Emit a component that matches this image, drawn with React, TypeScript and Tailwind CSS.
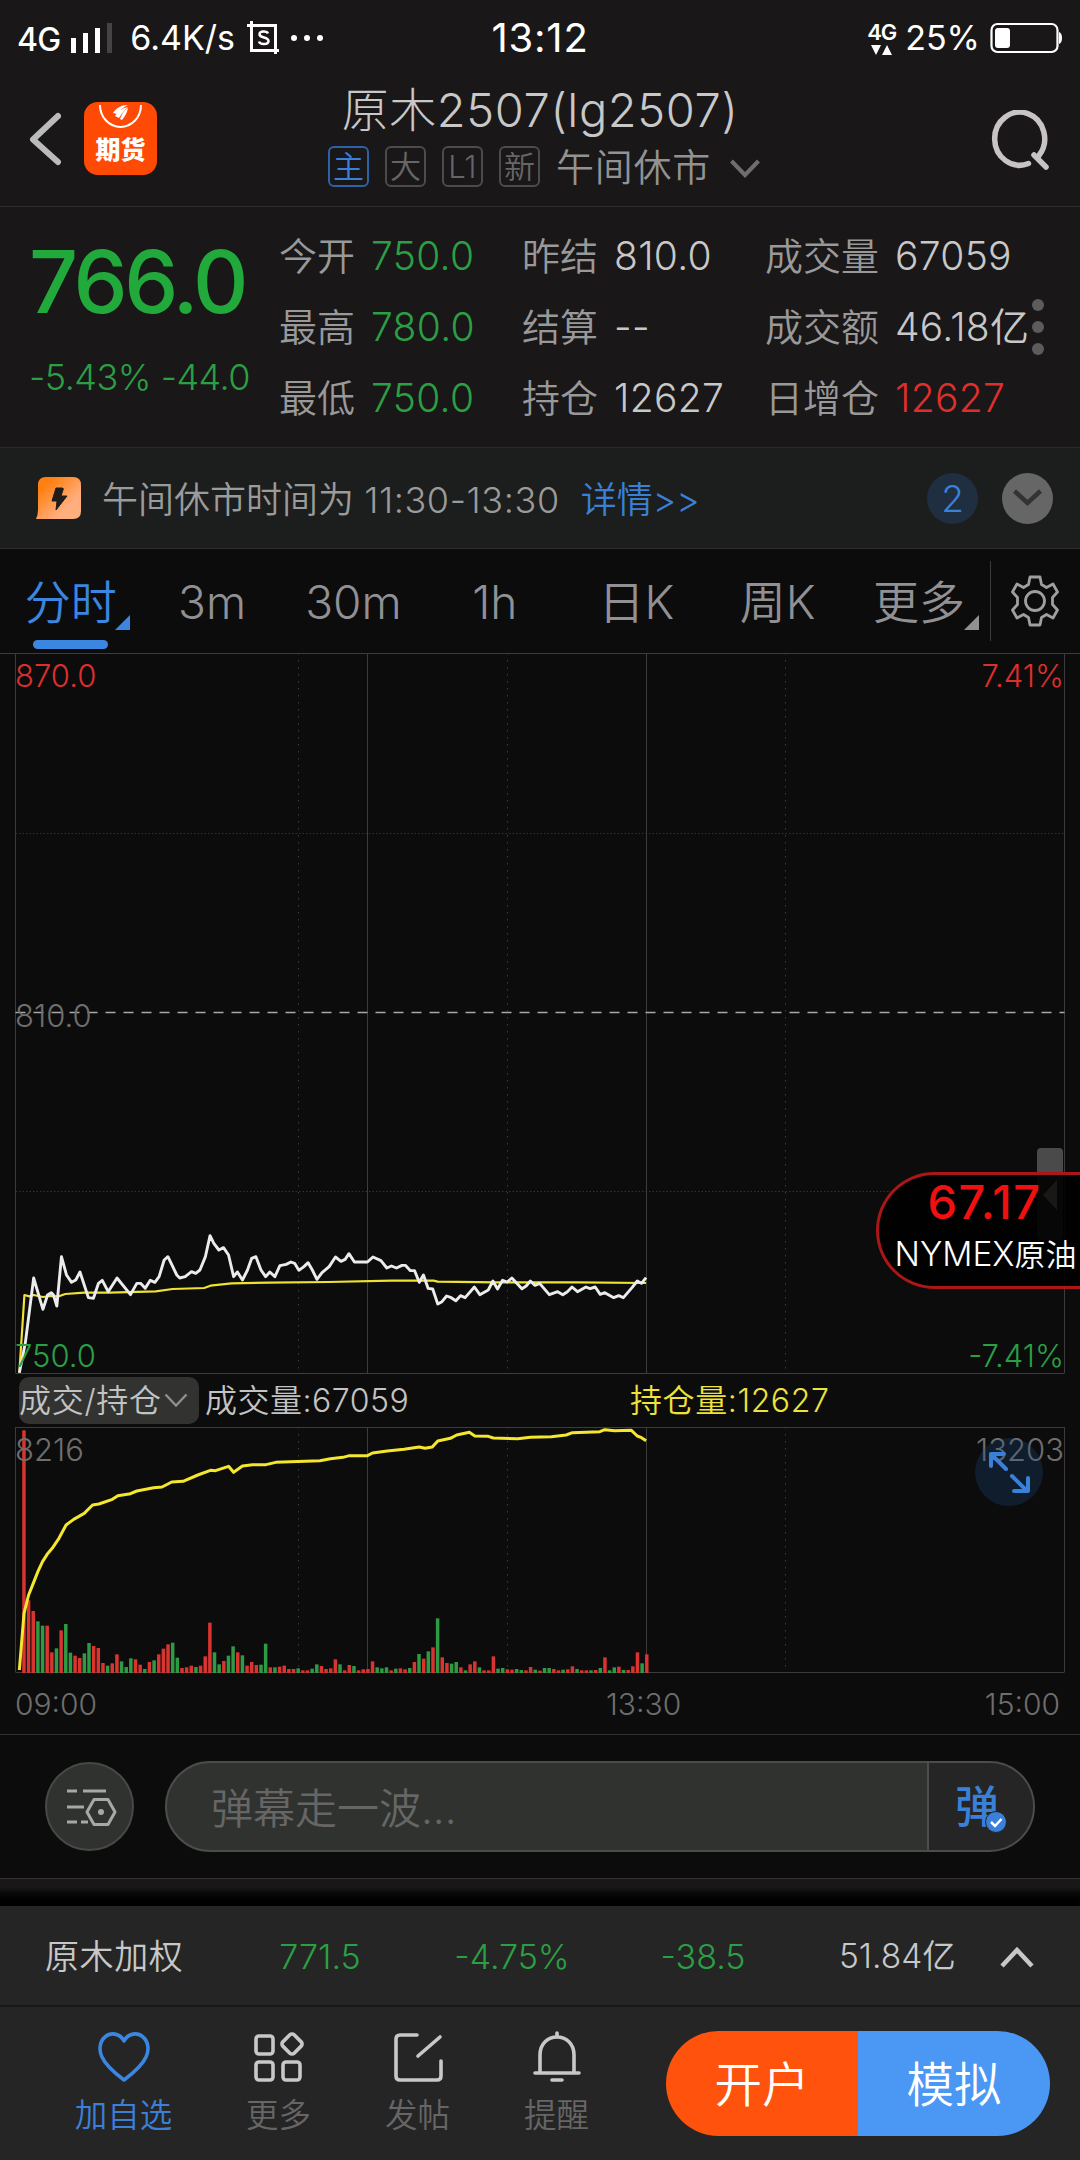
import type { ReactNode } from "react";

const UP = "#df2f2c";
const DOWN = "#2b9f44";

// One bar per minute: direction + height
const VOLUME =
  "r728 r218 r186 g155 g142 r142 r62 g74 r128 g147 g61 r52 r45 g59 g90 r81 r75 r30 g22 r29 r56 g35 g18 g44 r41 r25 g12 r33 g38 r56 r73 r86 g91 g46 r15 r17 r22 g18 r22 r50 r151 g62 g26 r36 g52 g80 r62 g53 r22 r33 r24 g25 g88 r17 g17 r19 r22 r12 r12 g14 r8 r8 g13 g26 r21 r12 r14 r41 g26 r8 r24 g21 r8 r11 r12 r35 g17 g14 g17 r8 g13 r14 r11 g15 r33 g57 r43 g65 r77 g164 r47 r30 g28 g33 r17 g8 r26 r35 g17 r8 r8 r50 g13 g15 r11 r10 g12 g9 r8 r18 g10 r7 g15 g15 r12 r8 g10 r11 r20 g12 r8 r8 g8 r9 g15 r47 g8 g17 r19 g9 r9 r20 r62 g29 r56"
    .split(" ")
    .map((s) => ({ up: s[0] === "r", h: Number(s.slice(1)) / 3 }));

const PRICE_LINE =
  "46,518 60,430 80,234 102,328 113,285 122,278 127,285 135,318 146,170 158,225 170,247 180,240 190,216 210,293 222,295 234,250 243,241 257,275 278,234 310,284 325,250 334,250 345,265 357,241 368,247 378,230 390,180 399,170 420,225 427,234 440,230 455,215 465,220 475,210 488,170 499,107 508,130 520,150 531,143 543,165 555,230 564,216 576,240 588,210 598,175 608,170 620,210 631,230 641,216 653,230 665,197 680,193 691,186 700,190 710,211 722,200 732,188 742,210 753,238 765,218 782,200 797,171 810,184 820,178 829,161 842,186 873,186 886,171 905,182 919,204 930,198 942,204 955,196 963,196 975,212 985,212 996,247 1006,225 1017,265 1028,267 1040,312 1050,305 1061,288 1072,293 1083,302 1094,287 1105,293 1127,261 1140,284 1160,270 1171,243 1182,267 1194,241 1205,246 1216,234 1240,266 1250,258 1260,243 1271,256 1282,250 1305,284 1325,275 1337,284 1348,275 1359,261 1372,275 1392,261 1402,266 1414,261 1426,283 1437,278 1458,293 1470,287 1481,293 1502,262 1514,243 1524,250 1535,233";
const AVG_LINE =
  "46,518 58,285 70,289 80,285 102,291 120,288 140,289 155,282 200,278 260,278 370,274 410,267 485,264 500,257 550,250 640,248 780,246 930,242 1030,242 1040,245 1180,247 1370,247 1535,249";
const OI_LINE =
  "46,780 57,610 68,555 79,520 90,485 101,455 112,433 124,415 140,385 157,345 175,328 200,310 220,285 235,282 267,268 280,257 310,251 325,243 365,233 385,231 408,216 435,214 470,195 500,181 512,182 543,169 555,187 576,168 600,164 632,164 655,157 760,152 785,146 815,142 830,137 873,137 885,129 920,123 960,118 996,111 1010,115 1027,111 1040,93 1070,85 1085,75 1115,67 1128,78 1160,79 1172,84 1230,86 1260,82 1310,80 1345,75 1360,68 1425,65 1437,59 1460,62 1500,61 1514,78 1524,83 1535,92";

const TABS = ["分时", "3m", "30m", "1h", "日K", "周K", "更多"];

const QUOTES = [
  [
    { label: "今开", value: "750.0", color: "text-[#2b9f44]" },
    { label: "最高", value: "780.0", color: "text-[#2b9f44]" },
    { label: "最低", value: "750.0", color: "text-[#2b9f44]" },
  ],
  [
    { label: "昨结", value: "810.0", color: "text-[#c8c8c8]" },
    { label: "结算", value: "--", color: "text-[#c8c8c8]" },
    { label: "持仓", value: "12627", color: "text-[#c8c8c8]" },
  ],
  [
    { label: "成交量", value: "67059", color: "text-[#c8c8c8]" },
    { label: "成交额", value: "46.18亿", color: "text-[#c8c8c8]" },
    { label: "日增仓", value: "12627", color: "text-[#df2f2c]" },
  ],
];

function StatusBar() {
  return (
    <div className="flex h-[76px] items-center pl-[17px] pr-[17px] text-white">
      <div className="flex flex-1 items-center">
        <span className="mt-1 text-[32px] font-medium leading-none tracking-tight">4G</span>
        <svg className="ml-[11px]" width="43" height="32" viewBox="0 0 43 32" fill="#fff">
          <rect x="0" y="16" width="5" height="15" />
          <rect x="12" y="11" width="5" height="20" />
          <rect x="24" y="6" width="5" height="25" />
          <rect x="36" y="1" width="5" height="30" fill="#444" />
        </svg>
        <span className="ml-4 text-[34px] leading-none">6.4K/s</span>
        <svg className="ml-3" width="33" height="34" viewBox="0 0 33 34" fill="none" stroke="#fff" strokeWidth="3">
          <path d="M0 4.5H28.500V33M4.500 0V29.500H32" />
          <path d="M21 12.500C20 10 12 9.500 12.500 13.500C13 17.500 21.500 15.500 21.500 20C21.500 24 13 24 12 20.500" strokeWidth="2.500" />
        </svg>
        <svg className="ml-[10px]" width="34" height="8" viewBox="0 0 34 8" fill="#fff">
          <circle cx="4" cy="4" r="3" />
          <circle cx="17" cy="4" r="3" />
          <circle cx="30" cy="4" r="3" />
        </svg>
      </div>
      <span className="text-[40px] leading-none tracking-[0.8px]">13:12</span>
      <div className="flex flex-1 items-center justify-end">
        <div className="mr-[9px] flex flex-col items-center">
          <span className="text-[22px] font-semibold leading-[20px] tracking-tighter">4G</span>
          <svg className="mt-[3px]" width="22" height="10" viewBox="0 0 22 10" fill="#fff">
            <path d="M0 0H10L5 10ZM11 10H21L16 0Z" />
          </svg>
        </div>
        <span className="text-[34px] leading-none">25%</span>
        <svg className="ml-[10px]" width="73" height="32" viewBox="0 0 73 32">
          <rect x="1.500" y="2" width="66" height="28" rx="6" fill="none" stroke="#fff" strokeWidth="2.200" />
          <rect x="5" y="6" width="15" height="20" rx="3" fill="#fff" />
          <path d="M69 10Q72 11 72 16Q72 21 69 22Z" fill="#fff" />
        </svg>
      </div>
    </div>
  );
}

function Tag({ children, active }: { children: ReactNode; active?: boolean }) {
  return (
    <span
      className={`flex h-[41px] w-[41px] items-center justify-center rounded-md border-2 text-[31px] font-[350] leading-none ${
        active ? "border-[#2c62a8] text-[#3a80d8]" : "border-[#4c4c4c] text-[#666]"
      }`}
    >
      {children}
    </span>
  );
}

function Header() {
  return (
    <div className="flex h-[131px] items-start border-b border-[#2c2c2c]">
      <div className="flex w-[328px] items-center pl-[29px] pt-[26px]">
        <svg width="32" height="56" viewBox="0 0 32 56" fill="none" stroke="#bbb" strokeWidth="6" strokeLinecap="round" strokeLinejoin="round">
          <path d="M29 5L4 28.500L29 51" />
        </svg>
        <div className="relative ml-[23px] flex h-[73px] w-[73px] items-end justify-center overflow-hidden rounded-[14px] bg-[#ff4a05] pb-[12px]">
          <svg className="absolute left-0 top-0" width="73" height="30" viewBox="0 0 73 30">
            <path d="M16 0A20.500 22 0 0 0 57 0" transform="translate(0 3)" fill="none" stroke="#fff" strokeWidth="2" />
            <path d="M29 11C32 6 37 3 44 3C38 6 35 9 33 12ZM31 14C35 8 39 6 44 5C40 9 37 12 35 16ZM36 17C38 11 41 8 44 6C43 11 41 14 38 18Z" fill="#fff" />
          </svg>
          <span className="text-[25px] font-black leading-none text-white">期货</span>
        </div>
      </div>
      <div className="flex w-[424px] flex-col items-center pt-[6px]">
        <h1 className="whitespace-nowrap text-[47px] font-light leading-[56px] tracking-[0.6px] text-[#c8c8c8]">原木2507(lg2507)</h1>
        <div className="mt-[8px] flex items-center gap-4 pl-[8px]">
          <Tag active>主</Tag>
          <Tag>大</Tag>
          <Tag>L1</Tag>
          <Tag>新</Tag>
          <span className="whitespace-nowrap text-[38px] font-[350] leading-[38px] tracking-[0.8px] text-[#929292]">午间休市</span>
          <svg className="ml-[3px] mt-1" width="30" height="20" viewBox="0 0 30 20" fill="none" stroke="#6e6e6e" strokeWidth="4">
            <path d="M1.500 2L15 16L28.500 2" />
          </svg>
        </div>
      </div>
      <div className="flex flex-1 justify-end pr-[30px] pt-[34px]">
        <svg width="60" height="62" viewBox="0 0 60 62" fill="none" stroke="#c8c4c6" strokeWidth="5.500" strokeLinecap="round">
          <path d="M38.500 53.500A25 26.500 0 1 1 49 45.500" />
          <path d="M44 45L56 57" />
        </svg>
      </div>
    </div>
  );
}

function QuotePanel() {
  return (
    <div className="relative flex h-[241px] border-b border-[#2a2a2a] pt-[14px]">
      <div className="flex w-[279px] flex-col pl-[29px] pt-[11px]">
        <span className="text-[86px] font-medium leading-[100px] tracking-[-3.3px] text-[#22a93c]">766.0</span>
        <span className="mt-[25px] whitespace-nowrap text-[36px] font-light leading-[40px] tracking-[-0.5px] text-[#2b9f44]">-5.43% -44.0</span>
      </div>
      {QUOTES.map((col, i) => (
        <div key={i} className={i === 2 ? "flex flex-col" : "flex w-[243px] flex-col"}>
          {col.map((q) => (
            <div key={q.label} className="flex h-[71px] items-center whitespace-nowrap text-[38px]">
              <span className="font-[350] text-[#999]">{q.label}</span>
              <span className={`ml-4 text-[39px] font-[350] tracking-[0.3px] ${q.color}`}>{q.value}</span>
            </div>
          ))}
        </div>
      ))}
      <div className="absolute right-[36px] top-[92px] flex flex-col gap-[10px]">
        <i className="h-3 w-3 rounded-full bg-[#5c5c5c]" />
        <i className="h-3 w-3 rounded-full bg-[#5c5c5c]" />
        <i className="h-3 w-3 rounded-full bg-[#5c5c5c]" />
      </div>
    </div>
  );
}

function Notice() {
  return (
    <div className="flex h-[101px] items-center border-b border-[#2b2d2c] bg-[#1c1e1d] pl-9 pr-[27px]">
      <svg width="46" height="43" viewBox="0 0 46 43">
        <defs>
          <linearGradient id="notice" x1="0" y1="0" x2="1" y2="1">
            <stop offset="0.200" stopColor="#ff7f11" />
            <stop offset="0.700" stopColor="#ffae7d" />
          </linearGradient>
        </defs>
        <path d="M2 8Q2 0 10 0H37Q45 0 45 8V34Q45 42 37 42H0Q2 38 2 33Z" fill="url(#notice)" />
        <path d="M20 11H26Q28 11 27 13L25 19H31L20 33L21 24H16Z" fill="#201c1a" stroke="#201c1a" strokeLinejoin="round" />
      </svg>
      <span className="ml-[20px] mt-1 whitespace-nowrap text-[36px] font-[350] text-[#9b9b9b]">
        午间休市时间为 <span className="tracking-[0.6px]">11:30-13:30</span>
      </span>
      <span className="ml-[21px] mt-1 whitespace-nowrap text-[36px] font-[350] text-[#3a80d8]">详情&gt;&gt;</span>
      <span className="ml-auto flex h-[51px] w-[51px] items-center justify-center rounded-full bg-[#202e42] text-[37px] font-[350] leading-none text-[#3a80d8]">
        2
      </span>
      <span className="ml-6 flex h-[51px] w-[51px] items-center justify-center rounded-full bg-[#666]">
        <svg width="29" height="18" viewBox="0 0 29 18" fill="none" stroke="#333" strokeWidth="4.500">
          <path d="M1.500 2L14.500 14L27.500 2" />
        </svg>
      </span>
    </div>
  );
}

function Tabs() {
  return (
    <div className="flex h-[104px] items-center">
      {TABS.map((tab, i) => (
        <div
          key={tab}
          className={`relative flex h-full w-[141.4px] items-center justify-center pt-[2px] text-[46px] font-[350] ${
            i === 0 ? "text-[#3a86e0]" : "text-[#919094]"
          }`}
        >
          <span className="whitespace-nowrap">{tab}</span>
          {(i === 0 || i === 6) && (
            <svg className="absolute right-[11px] top-[66px]" width="15" height="15" viewBox="0 0 15 15" fill="currentColor">
              <path d="M15 0V15H0Z" />
            </svg>
          )}
          {i === 0 && <span className="absolute bottom-[4px] left-[33px] h-[9px] w-[75px] rounded-full bg-[#3a86e0]" />}
        </div>
      ))}
      <div className="flex h-20 flex-1 items-center justify-center border-l border-[#3c3c3c]">
        <svg width="48" height="52" viewBox="0 0 48 52" fill="none" stroke="#a09fa0" strokeWidth="2.800" strokeLinejoin="round">
          <path d="M19 2H29L30.500 9.500L35.500 12.500L42 9L46.500 17L41.500 22.500V29.500L46.500 35L42 43L35.500 39.500L30.500 42.500L29 50H19L17.500 42.500L12.500 39.500L6 43L1.500 35L6.500 29.500V22.500L1.500 17L6 9L12.500 12.500L17.500 9.500Z" />
          <circle cx="24" cy="26" r="9.500" />
        </svg>
      </div>
    </div>
  );
}

type AxisTextProps = { x: number; y: number; fill: string; end?: boolean; size?: number; children: string };

function AxisText({ x, y, fill, end, size = 31, children }: AxisTextProps) {
  return (
    <text x={x} y={y} fill={fill} fontSize={size} fontWeight="350" textAnchor={end ? "end" : "start"}>
      {children}
    </text>
  );
}

function Grid({ height }: { height: number }) {
  return (
    <g stroke="#3c3c3c" strokeWidth="1">
      <path d={`M15.500 0V${height}M367.500 0V${height}M646.500 0V${height}M1064.500 0V${height}`} />
      <path d={`M298.500 0V${height}M507.500 0V${height}M785.500 0V${height}`} strokeDasharray="1.500 5.500" />
    </g>
  );
}

function PriceChart() {
  return (
    <div className="relative h-[721px]">
      <svg className="block" width="1080" height="721" viewBox="0 0 1080 721">
        <Grid height={720} />
        <g stroke="#3c3c3c">
          <path d="M0 .5H1080M15.500 720.500H1064.500" />
          <path d="M15.500 180.500H1064.500M15.500 538.500H1064.500" strokeDasharray="1.500 2" strokeOpacity=".8" />
        </g>
        <path d="M15.500 359.500H1064.500" stroke="#a8a8a8" strokeWidth="1.500" strokeDasharray="10 8" />
        <svg x="0" y="547" width="660" height="230" viewBox="0 0 1568 690" preserveAspectRatio="none" overflow="visible" fill="none" strokeLinejoin="round">
          <polyline points={AVG_LINE} stroke="#f0e232" strokeWidth="2.200" vectorEffect="non-scaling-stroke" />
          <polyline points={PRICE_LINE} stroke="#ececec" strokeWidth="2.900" vectorEffect="non-scaling-stroke" />
        </svg>
        <AxisText x={15} y={33.5} fill={UP}>870.0</AxisText>
        <AxisText x={1064} y={33.5} fill={UP} end>7.41%</AxisText>
        <AxisText x={15} y={373.5} fill="#6e6e6e">810.0</AxisText>
        <AxisText x={15} y={713.5} fill={DOWN}>750.0</AxisText>
        <AxisText x={1064} y={713.5} fill={DOWN} end>-7.41%</AxisText>
      </svg>

      {/* floating ticker, docked to the right edge */}
      <div className="absolute right-[17px] top-[495px] h-[92px] w-[26px] rounded-sm bg-[#4a4a4a]" />
      <div className="absolute right-0 top-[519px] flex h-[117px] w-[204px] flex-col items-center rounded-l-full border-[3px] border-r-0 border-[#ab1616] bg-black/90 pl-[12px] pt-[3px]">
        <span className="mr-[2px] text-[47px] font-medium leading-[48px] tracking-[1.4px] text-[#f01010]">67.17</span>
        <span className="mt-[5px] whitespace-nowrap text-[31px] font-[350] leading-[46px] text-white">
          <span className="text-[33.5px]">NYMEX</span>原油
        </span>
      </div>
      <svg className="absolute right-[23px] top-[527px]" width="14" height="30" viewBox="0 0 14 30" fill="#191817">
        <path d="M14 0V30L0 15Z" />
      </svg>
    </div>
  );
}

function Legend() {
  return (
    <div className="flex h-[53px] items-center pl-[19px] text-[32px] font-[350] leading-none text-[#c3c3c3]">
      <button className="flex h-[47px] w-[180px] items-center rounded-[10px] bg-[#323331]">
        <span className="whitespace-nowrap tracking-[0.7px]">成交/持仓</span>
        <svg className="ml-[2px] shrink-0" width="24" height="15" viewBox="0 0 24 15" fill="none" stroke="#8e8e8e" strokeWidth="2.500">
          <path d="M1.500 1.500L12 12.500L22.500 1.500" />
        </svg>
      </button>
      <span className="ml-[6px] w-[425px] whitespace-nowrap tracking-[0.5px]">成交量:67059</span>
      <span className="whitespace-nowrap tracking-[0.6px] text-[#efe23a]">持仓量:12627</span>
    </div>
  );
}

function VolumeChart() {
  return (
    <div className="relative h-[308px] border-b border-[#303030]">
      <svg className="block" width="1080" height="306" viewBox="0 0 1080 306">
        <Grid height={245} />
        <path d="M15.500 .5H1064.500M15.500 245.500H1064.500" stroke="#3c3c3c" />
        {VOLUME.map((v, i) => (
          <rect key={i} x={22.2 + i * 4.648} y={246 - v.h} width="3.500" height={v.h} fill={v.up ? "#d83430" : "#2f9a44"} />
        ))}
        <AxisText x={15} y={34} fill="#6e6e6e">8216</AxisText>
        <svg x="0" y="-17" width="660" height="320" viewBox="0 0 1568 960" preserveAspectRatio="none" overflow="visible" fill="none" strokeLinejoin="round">
          <polyline points={OI_LINE} stroke="#f5e72e" strokeWidth="3" vectorEffect="non-scaling-stroke" />
        </svg>
        <AxisText x={1064} y={34} fill="#6e6e6e" end>13203</AxisText>
        <AxisText x={15} y={288} size={30} fill="#6e6e6e">09:00</AxisText>
        <AxisText x={606} y={288} size={30} fill="#6e6e6e">13:30</AxisText>
        <AxisText x={1060} y={288} size={30} fill="#6e6e6e" end>15:00</AxisText>
      </svg>
      <button className="absolute right-[37px] top-[11px] h-[68px] w-[68px] rounded-full bg-[#1a5090]/25">
        <svg width="68" height="68" viewBox="0 0 68 68" fill="none" stroke="#3a80d8" strokeWidth="4" strokeLinecap="round" strokeLinejoin="round">
          <path d="M31 31L16 16M16 28V16H29M37 38L52 53M53 40V53H39" />
        </svg>
      </button>
    </div>
  );
}

function Danmaku() {
  return (
    <div className="flex h-[144px] items-center border-b border-[#333] pl-[45px]">
      <button className="flex h-[89px] w-[89px] items-center justify-center rounded-full border-2 border-[#474847] bg-[#30322f] pl-[5px] pt-[2px]">
        <svg width="52" height="40" viewBox="0 0 52 40" fill="none" stroke="#a8a8a8" strokeWidth="3">
          <path d="M1 3H11M17 3H40M1 19H18M1 34H11M15 34H22" />
          <path d="M28 11.500H42L49 24L42 36.500H28L21 24Z" strokeLinejoin="round" />
          <circle cx="35" cy="24" r="3" fill="#a8a8a8" stroke="none" />
        </svg>
      </button>
      <div className="ml-[31px] flex h-[91px] w-[870px] items-stretch overflow-hidden rounded-full border-2 border-[#4b4d4b] bg-[#30322f]">
        <span className="flex flex-1 items-center whitespace-nowrap pl-[44px] pt-[3px] text-[42px] font-[350] text-[#666]">弹幕走一波...</span>
        <div className="relative flex w-[106px] items-center border-l-2 border-[#4b4d4b] bg-[#252525] pl-[26px]">
          <span className="text-[44px] font-medium leading-none text-[#3a80d8]">弹</span>
          <svg className="absolute left-[56px] top-[48px]" width="22" height="22" viewBox="0 0 22 22">
            <circle cx="11" cy="11" r="10.500" fill="#3a80d8" stroke="#252525" />
            <path d="M6 11L10 15L16.500 8" fill="none" stroke="#fff" strokeWidth="2.500" />
          </svg>
        </div>
      </div>
    </div>
  );
}

function IndexBar() {
  return (
    <div className="flex h-[101px] items-center border-b-2 border-[#191718] bg-[#252525] pt-[2px] text-[34px] font-[350]">
      <span className="w-[234px] whitespace-nowrap pl-[45px] tracking-[0.6px] text-[#c8c8c8]">原木加权</span>
      <span className="w-[172px] text-center text-[#2b9f44]">771.5</span>
      <span className="w-[212px] text-center text-[#2b9f44]">-4.75%</span>
      <span className="w-[170px] text-center text-[#2b9f44]">-38.5</span>
      <span className="ml-[51px] w-[115px] whitespace-nowrap text-[33.5px] text-[#c8c8c8]">51.84亿</span>
      <svg className="ml-[46px]" width="34" height="22" viewBox="0 0 34 22" fill="none" stroke="#c8c8c8" strokeWidth="4.500">
        <path d="M2 20L17 4L32 20" />
      </svg>
    </div>
  );
}

function NavItem({ label, active, children }: { label: string; active?: boolean; children: ReactNode }) {
  return (
    <button className={`flex w-[139px] flex-col items-center pt-[24px] ${active ? "text-[#3a80d8]" : "text-[#666]"}`}>
      <svg width="52" height="52" viewBox="0 0 52 52" fill="none" stroke={active ? "#3a86e0" : "#c8c8c8"} strokeWidth="3.600" strokeLinecap="round" strokeLinejoin="round">
        {children}
      </svg>
      <span className="mt-[15px] whitespace-nowrap text-[32.5px] font-[350] leading-[36px]">{label}</span>
    </button>
  );
}

function BottomNav() {
  return (
    <div className="flex h-[153px] bg-[#252525] pl-[54px]">
      <NavItem label="加自选" active>
        <path d="M26 10C22 2 12 1 7 6C1 11 1 20 4 26C8 35 18 43 26 49C34 43 44 35 48 26C51 20 51 11 45 6C40 1 30 2 26 10Z" />
      </NavItem>
      <div className="ml-[16px] flex">
        <NavItem label="更多">
          <rect x="3" y="5" width="17" height="18" rx="3" />
          <rect x="3" y="31" width="17" height="18" rx="3" />
          <rect x="30" y="31" width="17" height="18" rx="3" />
          <rect x="31" y="5" width="16" height="16" rx="3" transform="rotate(45 39 13)" />
        </NavItem>
        <NavItem label="发帖">
          <path d="M25 4H8Q4 4 4 8V45Q4 49 8 49H45Q49 49 49 45V30M26 25L48 6" />
        </NavItem>
        <NavItem label="提醒">
          <path d="M9 42V24C9 0 43 0 43 24V42M4 42H48M26 2V6M21 49H31" />
        </NavItem>
      </div>
      <div className="absolute right-[30px] mt-[24px] flex h-[105px] w-[384px] overflow-hidden rounded-full text-[47.5px] font-[350] text-white">
        <button className="flex-1 bg-[#ff530d] pt-[3px]">开户</button>
        <button className="flex-1 bg-[#4a97f4] pt-[3px]">模拟</button>
      </div>
    </div>
  );
}

export default function App() {
  return (
    <div className="flex h-[2160px] w-[1080px] flex-col overflow-hidden bg-[#0c0c0c] font-['Inter','Noto_Sans_CJK_SC',sans-serif]">
      <div className="bg-[#191718]">
        <StatusBar />
        <Header />
        <QuotePanel />
      </div>
      <Notice />
      <Tabs />
      <PriceChart />
      <Legend />
      <VolumeChart />
      <Danmaku />
      <div className="h-[27px] bg-linear-to-b from-[#191718] from-30% to-black" />
      <IndexBar />
      <BottomNav />
    </div>
  );
}
